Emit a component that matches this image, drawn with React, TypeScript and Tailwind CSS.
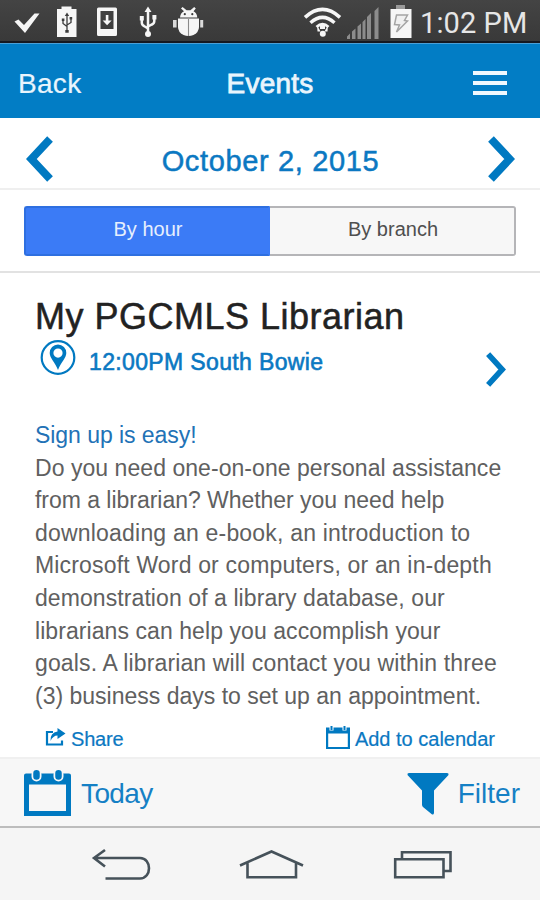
import React from "react";

const BLUE = "#0079c1";

const body: [string, string][] = [
  ["Do you need one-on-one personal assistance", "tracking-[0.05px]"],
  ["from a librarian? Whether you need help", "tracking-[-0.03px]"],
  ["downloading an e-book, an introduction to", "tracking-[0.2px]"],
  ["Microsoft Word or computers, or an in-depth", "tracking-[0.17px]"],
  ["demonstration of a library database, our", "tracking-[0.08px]"],
  ["librarians can help you accomplish your", "tracking-[0.07px]"],
  ["goals. A librarian will contact you within three", "tracking-[0.14px]"],
  ["(3) business days to set up an appointment.", "tracking-[0px]"],
];

function LeftStatusIcons() {
  return (
    <svg width="210" height="41" viewBox="0 0 210 41" fill="#f6f6f6">
      <path d="M14.500 21.500 L18.500 19.500 L24 25 L34.500 13.500 L39.500 13.500 L25 33 Z" />
      <path d="M57 9 H61.500 V6.500 H71.500 V9 H76.500 V37 H57 Z" />
      <g stroke="#3c3c3c" strokeWidth="1.300" fill="none">
        <path d="M67 15 V31 M63 20 V23.500 L67 26.500 M71 18.500 V22.500 L67 25" />
      </g>
      <path d="M67 12.500 l2.200 3.500 h-4.400z M65.300 30 h3.400 v2.800 h-3.400z M69.600 17 h2.600 v2.600 h-2.600z M61.800 18.500 h2.600 v2.600 h-2.600z" fill="#3c3c3c" />
      <path fillRule="evenodd" d="M98.500 7.500 H115.500 Q117 7.500 117 9 V34.500 Q117 36 115.500 36 H98.500 Q97 36 97 34.500 V9 Q97 7.500 98.500 7.500 Z M100.500 11 V29 H113.500 V11 Z" />
      <path d="M105.800 15 h2.600 v5.500 h3.200 l-4.500 4.800 l-4.500 -4.800 h3.200z" />
      <g stroke="#f6f6f6" strokeWidth="2.500" fill="none">
        <path d="M148 10 V35 M141.800 18 V22.500 Q141.800 25 144 26 L148 28.500 M154.300 17 V21 Q154.300 23.500 152 24.500 L148 26.500" />
      </g>
      <path d="M148 6.500 l3.500 5.500 h-7z M139.800 16 h4 v4.500 h-4z M152.400 15 h4 v4.500 h-4z" />
      <circle cx="148" cy="34" r="3" />
      <path d="M180 17.500 Q180.500 12.500 184 11.200 L181 8.400 L182.600 7 L186.600 10.200 H190.400 L194.200 7 L195.800 8.400 L193.500 11.200 Q196.800 12.500 197.300 17.500 Z" />
      <circle cx="184.800" cy="14.200" r="1.100" fill="#3c3c3c" />
      <circle cx="192.300" cy="14.200" r="1.100" fill="#3c3c3c" />
      <path d="M178 18.600 H199 V27 Q199 32 193.500 35 Q188.500 37 183.500 35 Q178 32 178 27 Z" />
      <path d="M188.500 19 V36" stroke="#8a8a8a" strokeWidth="1.100" />
      <path d="M173 20 h3.600 v7.500 h-3.600z M200.200 20 h3 v7.500 h-3z" opacity="0.85" />
    </svg>
  );
}

function RightStatusIcons() {
  return (
    <svg width="110" height="41" viewBox="303 0 110 41">
      <g fill="none" stroke="#f6f6f6" strokeWidth="3.600">
        <path d="M305 17.300 Q322.500 1.500 340 17.300" />
        <path d="M310.500 22.800 Q322.500 12 334.500 22.800" strokeWidth="3.400" />
        <path d="M316.500 27 Q322.500 21.500 328.500 27" strokeWidth="2.800" />
      </g>
      <path d="M317 25 l3.500 6.500 h-3z M328 25 l-3.500 6.500 h3z" fill="#f6f6f6" />
      <path d="M320 24 h5 v5 h-5z" fill="#f6f6f6" />
      <circle cx="322.800" cy="33.800" r="3" fill="#f6f6f6" />
      <g fill="#8c8c8c">
        <path d="M347 39 v-2.500 l3 -3 v5.500z M352 39 v-7.500 l3.500 -3 v10.500z M357.500 39 v-12.500 l3.500 -3 v15.500z M362.500 39 v-17 l3 -3 v20z M367 39 v-22 l4 -4 v26z M374.500 39 v-28 l4 -4 v32z" />
      </g>
      <path d="M396 5 h9 v4 h-9z" fill="#999" />
      <path d="M390.500 9 h21 v29 h-21z" fill="#f6f6f6" />
      <path d="M396.500 15 L407.500 15 L404.500 20.500 L407.500 21 L396.500 32 L399.500 25 L394.500 24.500 Z" fill="#f0f0f0" stroke="#a4a4a4" strokeWidth="1.500" />
    </svg>
  );
}

function Chevron({ dir, w, h, t }: { dir: "left" | "right"; w: number; h: number; t: number }) {
  const i = t * 0.38;
  const d =
    dir === "left"
      ? `M${w - i} ${i} L${t * 0.68} ${h / 2} L${w - i} ${h - i}`
      : `M${i} ${i} L${w - t * 0.68} ${h / 2} L${i} ${h - i}`;
  return (
    <svg width={w} height={h} viewBox={`0 0 ${w} ${h}`} fill="none" stroke={BLUE} strokeWidth={t}>
      <path d={d} />
    </svg>
  );
}

export default function App() {
  return (
    <div className="flex h-[900px] w-[540px] flex-col overflow-hidden bg-white font-['Liberation_Sans',Arial,sans-serif] whitespace-nowrap">
      <div className="flex h-[43px] shrink-0 items-start border-b-2 border-[#151820] bg-linear-to-b from-[#444444] to-[#393939]">
        <LeftStatusIcons />
        <div className="ml-[93px] flex">
          <RightStatusIcons />
          <span className="ml-[7px] pt-[3px] font-[Roboto,sans-serif] text-[29px] leading-[40px] tracking-[0.1px] text-[#e6e6e6]">1:02 PM</span>
        </div>
      </div>

      <header className="grid h-[75px] shrink-0 grid-cols-3 items-center border-t border-[#4a9fd6] bg-[#027dc5] px-[18px] pt-[3px] text-[28px] text-[#e9f5fd]">
        <span className="pt-[2px] tracking-[0.3px] [-webkit-text-stroke:0.2px]">Back</span>
        <span className="pt-[2px] text-center tracking-[0.2px] [-webkit-text-stroke:0.8px]">Events</span>
        <div className="mr-[15px] flex flex-col gap-[6px] justify-self-end">
          <i className="h-1 w-[34px] bg-[#f0f8fe]" />
          <i className="h-1 w-[34px] bg-[#f0f8fe]" />
          <i className="h-1 w-[34px] bg-[#f0f8fe]" />
        </div>
      </header>

      <div className="flex h-[72px] shrink-0 items-center justify-between border-b-2 border-[#efefef] pr-[25px] pl-[26px]">
        <div className="mt-3"><Chevron dir="left" w={27} h={46} t={7.8} /></div>
        <span className="mt-[17px] text-[29px] tracking-[0.65px] text-[#0b78c2] [-webkit-text-stroke:0.5px]">October 2, 2015</span>
        <div className="mt-3"><Chevron dir="right" w={27} h={46} t={7.8} /></div>
      </div>

      <div className="h-[83px] shrink-0 border-b-2 border-[#e2e2e2] px-6 pt-4">
        <div className="flex h-[50px] text-[20px]">
          <div className="w-[246px] rounded-l-[3px] border-2 border-[#2e6fe0] border-r-[#3b7bf6] bg-[#3b7bf6] pl-[2px] text-center leading-[43px] text-[#e6effd]">By hour</div>
          <div className="w-[246px] rounded-r-[3px] border-2 border-l-0 border-[#b5b5b8] bg-[#f7f7f7] pl-[2px] text-center leading-[43px] text-[#4f4f4f]">By branch</div>
        </div>
      </div>

      <main className="flex h-[484px] shrink-0 flex-col pl-[35px]">
        <h1 className="mt-[23px] text-[36px] leading-[42px] tracking-[0.5px] text-[#222] [-webkit-text-stroke:0.5px]">My PGCMLS Librarian</h1>
        <div className="flex h-[50px] items-start">
          <svg className="mt-[2px] ml-[5px]" width="36" height="36" viewBox="0 0 36 36">
            <circle cx="18" cy="17.500" r="16.300" fill="none" stroke={BLUE} strokeWidth="2.200" />
            <path fillRule="evenodd" fill={BLUE} d="M18 4.500 A8.300 8.300 0 0 1 26.300 13 C26.300 18 21 22 18 30 C15 22 9.700 18 9.700 13 A8.300 8.300 0 0 1 18 4.500 Z M18 8.500 A4.600 4.600 0 1 0 18 17.700 A4.600 4.600 0 1 0 18 8.500 Z" />
          </svg>
          <span className="mt-[10px] ml-[13px] text-[23px] leading-7 tracking-[0.36px] text-[#0b78c2] [-webkit-text-stroke:0.6px]">12:00PM South Bowie</span>
          <div className="mt-[14px] mr-[34px] ml-auto"><Chevron dir="right" w={20} h={35} t={5.6} /></div>
        </div>
        <div className="mt-[31px] text-[23px] leading-[32.6px]">
          <p className="tracking-[-0.05px] text-[#2272b6]">Sign up is easy!</p>
          {body.map(([line, tracking]) => (
            <p key={line} className={`${tracking} text-[#606060]`}>{line}</p>
          ))}
        </div>
        <div className="mt-[14px] flex items-start text-[20px] leading-6 text-[#0b78c2]">
          <svg className="mt-[2px] ml-[10px]" width="21" height="21" viewBox="0 0 21 21" fill="none" stroke={BLUE}>
            <path d="M8 4 H2 V16.500 H17 V12.500" strokeWidth="2.200" />
            <path d="M12.500 0 L20.500 5.500 L12.500 11 V7.500 Q8 7.500 5.500 13 Q5 4.500 12.500 3.500 Z" fill={BLUE} stroke="none" />
          </svg>
          <span className="mt-px ml-[5px] tracking-[-0.2px] [-webkit-text-stroke:0.2px]">Share</span>
          <div className="mr-[45px] ml-auto flex">
            <svg className="mr-[5px]" width="24" height="24" viewBox="0 0 24 24">
              <path fillRule="evenodd" fill={BLUE} d="M0 1.500 H24 V23 H0 Z M2.200 7.500 V21 H21.800 V7.500 Z" />
              <path d="M5.500 0 V4.500 M18.500 0 V4.500" stroke="#fff" strokeWidth="4" />
              <path d="M5.500 0 V4 M18.500 0 V4" stroke={BLUE} strokeWidth="2" />
            </svg>
            <span className="mt-px [-webkit-text-stroke:0.2px]">Add to calendar</span>
          </div>
        </div>
      </main>

      <footer className="flex h-[71px] shrink-0 items-start border-t-2 border-b-2 border-t-[#f0f0f0] border-b-[#bdbdbd] bg-[#f7f7f7] text-[28px] leading-8 text-[#1580c5]">
        <svg className="mt-[11px] ml-6" width="47" height="47" viewBox="0 0 47 47">
          <path fillRule="evenodd" fill={BLUE} d="M2 3.500 H45 Q47 3.500 47 5.500 V46 H0 V5.500 Q0 3.500 2 3.500 Z M5 14.500 V41 H42 V14.500 Z" />
          <path d="M12.500 4.500 V6.500 M34.500 4.500 V6.500" stroke="#f7f7f7" strokeWidth="10" strokeLinecap="round" />
          <path d="M12.500 3.300 V6.500 M34.500 3.300 V6.500" stroke={BLUE} strokeWidth="6.500" strokeLinecap="round" />
        </svg>
        <span className="mt-[19px] ml-[10px] tracking-[-0.6px]">Today</span>
        <svg className="mt-[14px] ml-auto" width="42" height="43" viewBox="0 0 42 43" fill={BLUE}>
          <path d="M2 0 H40 Q42 0 41.500 2 L27 17.500 V40 Q26.500 42.500 24.500 41 L16 34 Q15 33 15 31.500 V17.500 L0.500 2 Q0 0 2 0 Z" />
        </svg>
        <span className="mt-[19px] mr-[20px] ml-[9px]">Filter</span>
      </footer>

      <nav className="h-[72px] shrink-0 bg-[#f5f5f5]">
        <svg width="540" height="72" viewBox="0 828 540 72" fill="none" stroke="#46525a" strokeWidth="2.600">
          <path d="M105 850 L94 858 L105 866.500 M94 858 H140 C152 858 152 878.500 140 878.500 H105.500" />
          <path d="M240 865.500 L271.500 851.500 L303 865.500 M247.500 863 V877.300 H296 V863" />
          <path d="M395.200 859.200 H443.500 V877.300 H395.200 Z M402 859 V852.200 H450.500 V871 H443.500" />
        </svg>
      </nav>
    </div>
  );
}
